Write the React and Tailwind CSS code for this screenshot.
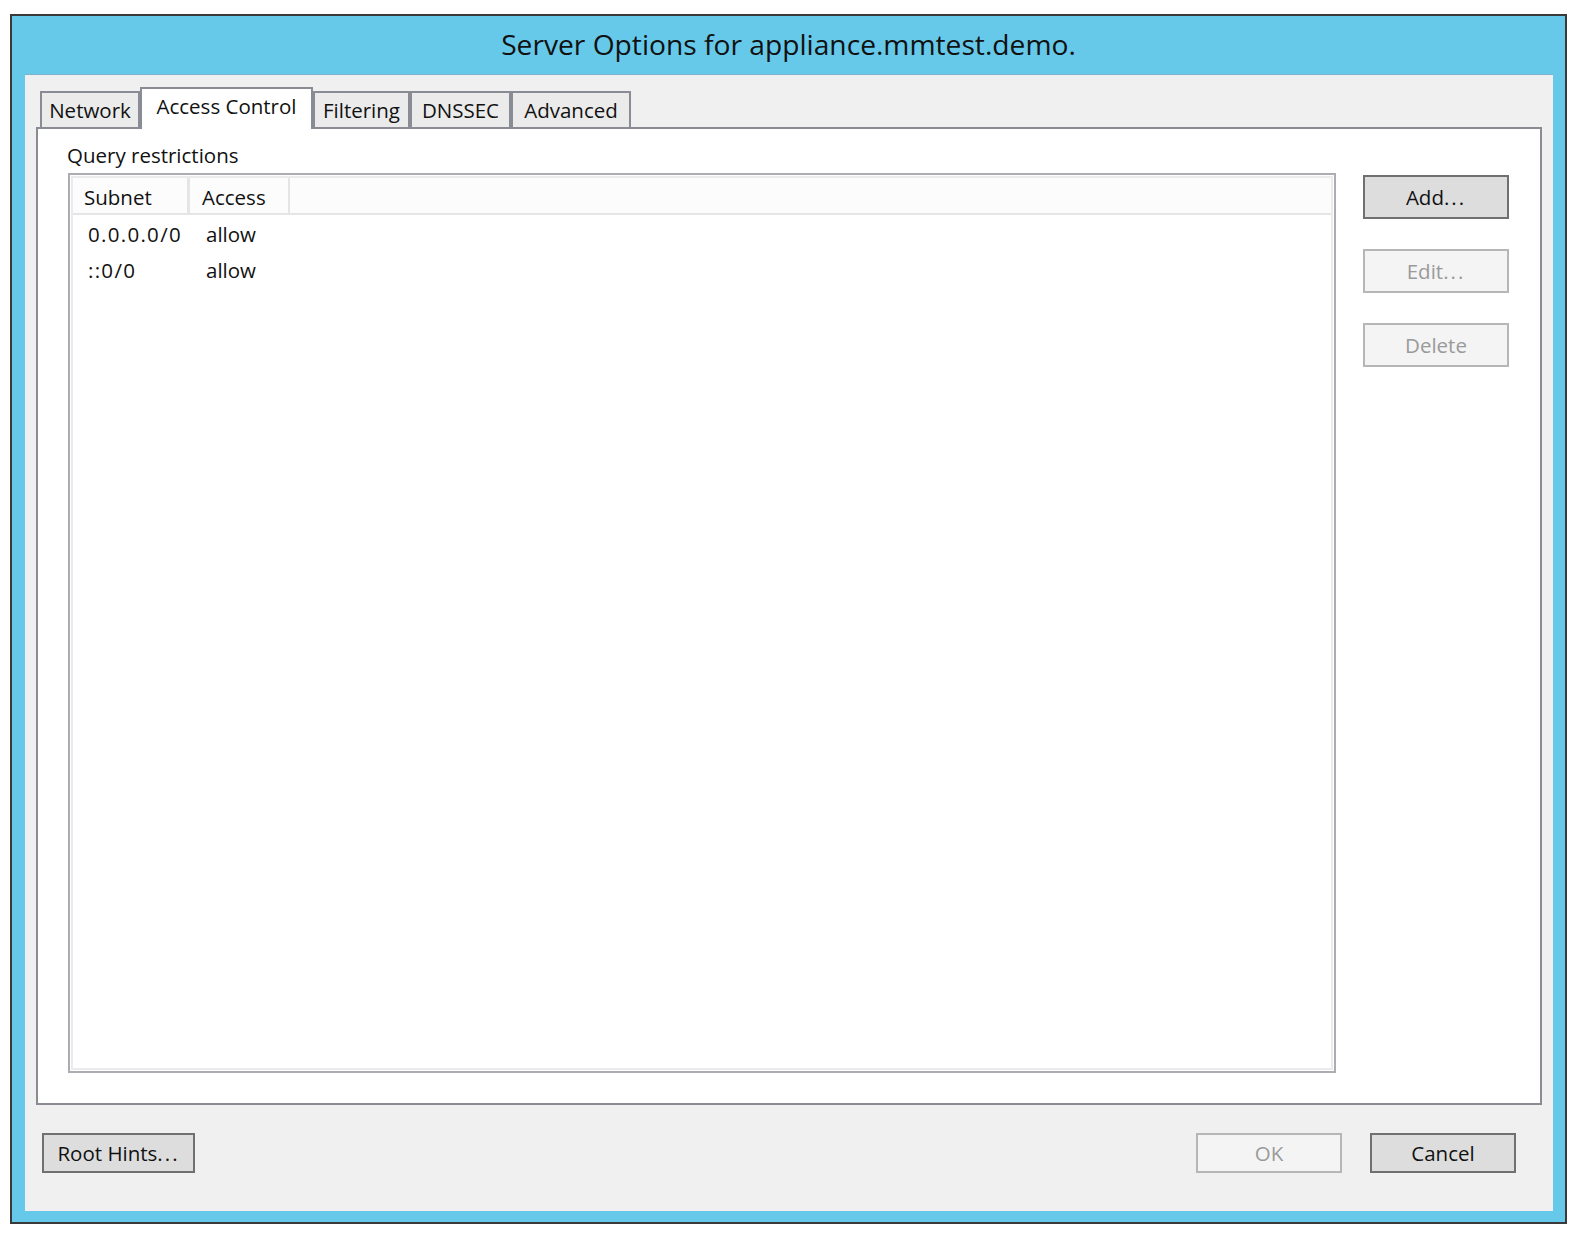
import React from 'react';

const FONT = { fontFamily: '"Open Sans", "Noto Sans", "DejaVu Sans", sans-serif' };

const TABS = [
  { label: 'Network', w: 'w-[100px]' },
  { label: 'Access Control', w: 'w-[173px]', active: true },
  { label: 'Filtering', w: 'w-[97px]' },
  { label: 'DNSSEC', w: 'w-[101px]' },
  { label: 'Advanced', w: 'w-[120px]' },
];

const ROWS = [
  { subnet: '0.0.0.0/0', access: 'allow' },
  { subnet: '::0/0', access: 'allow' },
];

// "..." in the Windows font is spaced wider
function Dots() {
  return <span className="tracking-[2px]">...</span>;
}

function Button({ children, disabled, className = '' }) {
  return (
    <div
      className={`flex items-center justify-center border-2 text-[20.5px] leading-none pt-[1px] ${
        disabled ? 'bg-[#f4f4f4] border-[#b4b6b8] text-[#9a9a9a]' : 'bg-[#dddddd] border-[#707070] text-[#111]'
      } ${className}`}
    >
      {children}
    </div>
  );
}

export default function App() {
  return (
    <div className="w-[1594px] h-[1242px] bg-white pt-[14px] pl-[10px]" style={FONT}>
      <div className="w-[1557px] h-[1210px] border-2 border-[#3a3a3a] bg-[#66c9ea] flex flex-col">
        {/* title bar */}
        <div className="h-[58px] flex items-center justify-center text-[28.2px] text-[#111] leading-none pb-[1px]">
          Server Options for appliance.mmtest.demo.
        </div>

        {/* client area */}
        <div className="ml-[13px] mr-[12px] h-[1137px] bg-[#f0f0f0] border-t border-[#7fb3cc] px-[11px] pt-[12px]">
          {/* tabs */}
          <div className="flex items-end h-[40px] pl-[4px]">
            {TABS.map((t) =>
              t.active ? (
                <div
                  key={t.label}
                  className={`${t.w} h-[42px] -mb-[2px] relative z-10 bg-white border-2 border-b-0 border-[#898c95] flex items-start justify-center pt-[5px] text-[20.5px] leading-[24px] text-[#111]`}
                >
                  {t.label}
                </div>
              ) : (
                <div
                  key={t.label}
                  className={`${t.w} h-[36px] bg-[#ebebeb] border-2 border-b-0 border-[#898c95] flex items-center justify-center text-[20.5px] leading-none text-[#111]`}
                >
                  {t.label}
                </div>
              )
            )}
          </div>

          {/* tab page */}
          <div className="w-[1506px] h-[978px] bg-white border-2 border-[#898c95] pl-[30px]">
            <div className="h-[44px] pt-[14px] -ml-[1px] text-[20.5px] leading-[24px] text-[#111]">Query restrictions</div>
            <div className="flex items-start">
              {/* list view */}
              <div className="w-[1268px] h-[900px] border-2 border-[#abadb3] p-[1px] bg-white">
                <div className="h-full border-2 border-[#ebebeb] bg-white">
                  <div className="flex h-[37px] border-b-2 border-[#e5e5e5] bg-[#fcfcfc] text-[20.5px] text-[#111]">
                    <div className="w-[117px] border-r-[3px] border-[#e5e5e5] flex items-center pl-[11px] pt-[3px] leading-none">Subnet</div>
                    <div className="w-[100px] border-r-[2px] border-[#e5e5e5] flex items-center pl-[12px] pt-[3px] leading-none">Access</div>
                  </div>
                  {ROWS.map((r) => (
                    <div key={r.subnet} className="flex h-[36px] items-center pt-[2px] text-[20.5px] leading-none text-[#111]">
                      <div className="w-[117px] pl-[15px] tracking-[1.3px]">{r.subnet}</div>
                      <div className="pl-[16px]">{r.access}</div>
                    </div>
                  ))}
                </div>
              </div>

              {/* side buttons */}
              <div className="ml-[27px] mt-[2px] flex flex-col gap-[30px]">
                <Button className="w-[146px] h-[44px]">Add<Dots /></Button>
                <Button disabled className="w-[146px] h-[44px]">Edit<Dots /></Button>
                <Button disabled className="w-[146px] h-[44px]">Delete</Button>
              </div>
            </div>
          </div>

          {/* bottom buttons */}
          <div className="flex items-center mt-[28px] pl-[6px]">
            <Button className="w-[153px] h-[40px]">Root Hints<Dots /></Button>
            <div className="flex-1" />
            <Button disabled className="w-[146px] h-[40px]">OK</Button>
            <Button className="w-[146px] h-[40px] ml-[28px] mr-[26px]">Cancel</Button>
          </div>
        </div>
      </div>
    </div>
  );
}
